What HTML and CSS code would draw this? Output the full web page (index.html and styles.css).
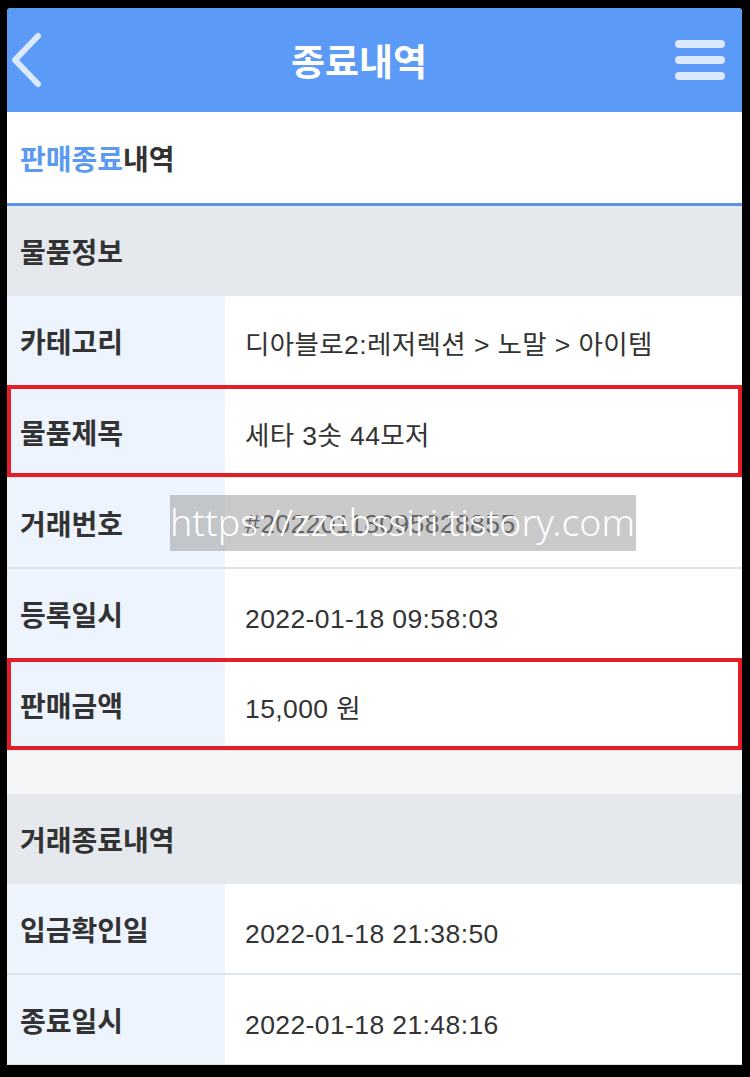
FILE: index.html
```html
<!DOCTYPE html>
<html lang="ko">
<head>
    <meta charset="UTF-8">
    <meta name="viewport" content="width=device-width, initial-scale=1.0">
    <title>종료내역</title>
    <link rel="stylesheet" href="styles.css">
</head>
<body>
    <div class="screen">
        <header class="topbar">
            <a href="#" class="back" aria-label="뒤로">
                <svg width="34" height="56" viewBox="0 0 34 56">
                    <polyline points="29,4 6,28 29,52" fill="none" stroke="#dce8fb" stroke-width="6" stroke-linecap="round" stroke-linejoin="round"/>
                </svg>
            </a>
            <h1>종료내역</h1>
            <a href="#" class="menu" aria-label="메뉴">
                <span></span><span></span><span></span>
            </a>
        </header>

        <div class="page-title"><span class="accent">판매종료</span>내역</div>

        <section class="block">
            <h2 class="block-title">물품정보</h2>
            <div class="row">
                <div class="label">카테고리</div>
                <div class="value">디아블로2:레저렉션 &gt; 노말 &gt; 아이템</div>
            </div>
            <div class="row marked">
                <div class="label">물품제목</div>
                <div class="value">세타 3솟 44모저</div>
            </div>
            <div class="row">
                <div class="label">거래번호</div>
                <div class="value">#20220118095828855</div>
                <div class="watermark">https://zzebssiri.tistory.com</div>
            </div>
            <div class="row">
                <div class="label">등록일시</div>
                <div class="value num">2022-01-18 09:58:03</div>
            </div>
            <div class="row marked">
                <div class="label">판매금액</div>
                <div class="value">15,000 원</div>
            </div>
        </section>

        <div class="spacer"></div>

        <section class="block">
            <h2 class="block-title">거래종료내역</h2>
            <div class="row">
                <div class="label">입금확인일</div>
                <div class="value num">2022-01-18 21:38:50</div>
            </div>
            <div class="row">
                <div class="label">종료일시</div>
                <div class="value num">2022-01-18 21:48:16</div>
            </div>
        </section>
    </div>
</body>
</html>
```

FILE: styles.css
```css
html, body {
    margin: 0;
    padding: 0;
    background: #000;
}

body {
    font-family: "Noto Sans CJK KR", "Noto Sans", sans-serif;
    color: #333;
}

.screen {
    margin: 8px 8px 0 7px;
    height: 1057px;
    overflow: hidden;
    background: #fff;
    border-radius: 4px 4px 0 0;
}

.topbar {
    height: 104px;
    background: #5b9af6;
    display: flex;
    align-items: center;
    justify-content: space-between;
    padding: 0 17px 0 2px;
}

.topbar h1 {
    margin: 0 16px 0 0;
    color: #fff;
    font-size: 37px;
    font-weight: 700;
}

.back {
    display: flex;
    width: 50px;
}

.menu {
    display: flex;
    flex-direction: column;
    gap: 8px;
    width: 50px;
}

.menu span {
    display: block;
    height: 8px;
    background: #dce8fb;
    border-radius: 4px;
}

.page-title {
    height: 91px;
    display: flex;
    align-items: center;
    padding-left: 13px;
    font-size: 28px;
    font-weight: 700;
    border-bottom: 3px solid #5a95e6;
}

.accent {
    color: #5b9af0;
}

.block-title {
    margin: 0;
    height: 90px;
    display: flex;
    align-items: center;
    padding-left: 13px;
    background: #e5e9ed;
    font-size: 28px;
    font-weight: 700;
}

.row {
    position: relative;
    display: flex;
    height: 89px;
    border-bottom: 2px solid #dde3ec;
}

.row.marked::after {
    content: "";
    position: absolute;
    left: 0;
    right: 0;
    top: -2px;
    bottom: -1px;
    border: 4px solid #e41e26;
    pointer-events: none;
}

.label {
    width: 205px;
    flex: none;
    display: flex;
    align-items: center;
    padding-left: 13px;
    background: #eef4fe;
    font-size: 28px;
    font-weight: 700;
}

.value {
    display: flex;
    align-items: center;
    padding: 4px 0 0 20px;
    font-family: "Liberation Sans", "Noto Sans CJK KR", sans-serif;
    font-size: 26.5px;
    font-weight: 400;
    letter-spacing: 0.4px;
}

.value.num {
    padding-top: 12px;
}

.watermark {
    position: absolute;
    left: 163px;
    top: 17px;
    width: 466px;
    height: 56px;
    background: rgba(150, 150, 150, 0.5);
    color: #fff;
    font-family: "Noto Sans", sans-serif;
    font-size: 37.5px;
    font-weight: 300;
    line-height: 54px;
    white-space: nowrap;
}

.spacer {
    height: 43px;
    background: #f3f5f7;
}
```
